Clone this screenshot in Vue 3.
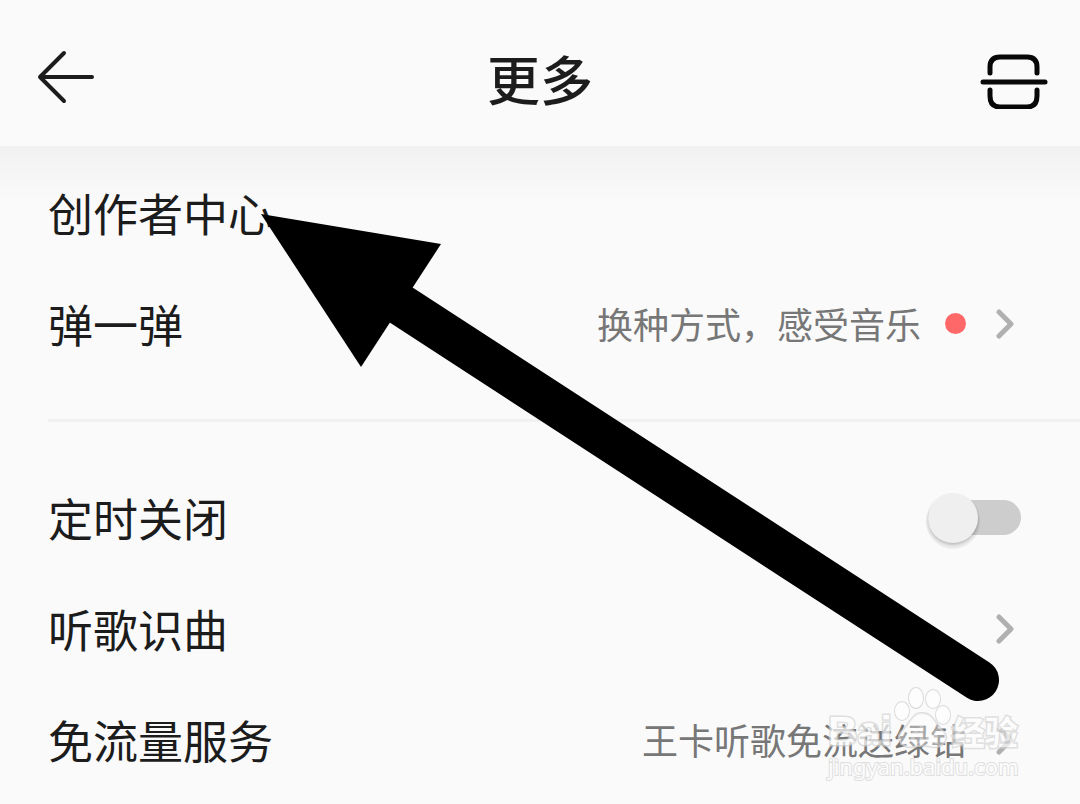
<script setup>
import { ref } from 'vue'

const timerOn = ref(false)

const discover = [
  { label: '创作者中心' },
  { label: '弹一弹', note: '换种方式，感受音乐', dot: true, chevron: true },
]
const services = [
  { label: '听歌识曲', chevron: true },
  { label: '免流量服务', note: '王卡听歌免流送绿钻', chevron: true },
]
</script>

<template>
  <div class="page">
    <header class="bar">
      <button class="icon-btn" type="button" aria-label="返回">
        <svg width="68" height="64" viewBox="0 0 68 64">
          <path d="M32 8 L8 32 L32 56 M8 32 H60" />
        </svg>
      </button>
      <h1>更多</h1>
      <button class="icon-btn" type="button" aria-label="扫一扫">
        <svg class="scan" width="68" height="64" viewBox="0 0 68 64">
          <path d="M10 28 V22 Q10 12 20 12 H47 Q57 12 57 22 V28" />
          <path d="M3 37 H65" />
          <path d="M10 45 V51 Q10 62 20 62 H47 Q57 62 57 51 V45" />
        </svg>
      </button>
    </header>

    <main>
      <nav class="group first">
        <a v-for="item in discover" :key="item.label" class="row" href="#">
          <span class="label">{{ item.label }}</span>
          <span v-if="item.note" class="note">{{ item.note }}</span>
          <span v-if="item.dot" class="dot"></span>
          <svg v-if="item.chevron" class="chevron" width="18" height="30" viewBox="0 0 18 30">
            <path d="M3 3 L15 15 L3 27" />
          </svg>
        </a>
      </nav>
      <hr />
      <nav class="group second">
        <div class="row timer">
          <label class="label" for="timer">定时关闭</label>
          <input id="timer" v-model="timerOn" class="switch" type="checkbox" role="switch" />
        </div>
        <a v-for="item in services" :key="item.label" class="row" href="#">
          <span class="label">{{ item.label }}</span>
          <span v-if="item.note" class="note">{{ item.note }}</span>
          <svg v-if="item.chevron" class="chevron" width="18" height="30" viewBox="0 0 18 30">
            <path d="M3 3 L15 15 L3 27" />
          </svg>
        </a>
      </nav>
    </main>

    <svg class="pointer" width="740" height="490" viewBox="260 212 740 490" aria-hidden="true">
      <path d="M261 214 L441 244 L361 367 Z" />
      <path class="shaft" d="M395 301 L978 680" />
    </svg>

    <div class="watermark">
      <div class="brand">
        <span>Bai</span>
        <svg width="60" height="64" viewBox="0 0 60 64" aria-hidden="true">
          <ellipse cx="10" cy="24" rx="7" ry="9" />
          <ellipse cx="24" cy="11" rx="7" ry="10" />
          <ellipse cx="41" cy="12" rx="7" ry="9" />
          <ellipse cx="51" cy="28" rx="7" ry="9" />
          <path class="pad" d="M30 26 C42 26 43 38 52 45 C58 52 50 62 40 60 C33 58 28 58 21 60 C11 62 3 52 9 45 C18 38 19 26 30 26 Z" />
          <text x="18" y="57">du</text>
        </svg>
        <span class="cn">经验</span>
      </div>
      <div class="site">jingyan.baidu.com</div>
    </div>
  </div>
</template>

<style>
body {
  background: #fafafa;
}
</style>

<style scoped>
.page {
  position: relative;
  min-height: 100vh;
  box-sizing: border-box;
  overflow: hidden;
  background: #fafafa;
  color: #1c1c1c;
  font-family: "Noto Sans CJK SC", sans-serif;
}
.bar {
  display: flex;
  align-items: center;
  justify-content: space-between;
  height: 146px;
  padding: 8px 32px 0;
  box-sizing: border-box;
}
.icon-btn {
  display: flex;
  width: 68px;
  padding: 0;
  border: 0;
  background: none;
}
.icon-btn svg {
  fill: none;
  stroke: #1c1c1c;
  stroke-width: 4;
  stroke-linecap: round;
  stroke-linejoin: round;
}
.icon-btn .scan {
  stroke: #080808;
  stroke-width: 5;
}
h1 {
  margin: 0;
  padding-top: 2px;
  font-size: 53px;
  line-height: 80px;
  font-weight: 500;
}
main {
  background: linear-gradient(#f1f1f1, #fafafa 56px);
}
.first {
  padding-top: 14px;
}
.second {
  padding-top: 43px;
}
.row {
  display: flex;
  align-items: center;
  height: 111px;
  box-sizing: border-box;
  padding: 0 66px 6px 48px;
  color: inherit;
  text-decoration: none;
}
.timer {
  padding-right: 59px;
}
.label {
  flex: 1;
  font-size: 45px;
  line-height: 64px;
}
.note {
  margin-right: 30px;
  padding-bottom: 2px;
  color: #777;
  font-size: 36px;
  line-height: 52px;
}
.note:has(+ .dot) {
  margin-right: 24px;
}
.dot {
  width: 21px;
  height: 21px;
  margin-right: 30px;
  border-radius: 50%;
  background: #ff6868;
}
.chevron {
  fill: none;
  stroke: #b0b0b0;
  stroke-width: 5;
  stroke-linecap: round;
  stroke-linejoin: round;
}
hr {
  height: 3px;
  margin: 37px 0 0 48px;
  border: 0;
  background: #f1f1f1;
}
.switch {
  display: flex;
  align-items: center;
  appearance: none;
  width: 93px;
  height: 35px;
  margin: 0;
  border-radius: 18px;
  background: #cdcdcd;
}
.switch::before {
  content: "";
  width: 50px;
  height: 50px;
  border-radius: 50%;
  background: #efefef;
  box-shadow: 0 2px 3px rgba(0, 0, 0, 0.2), 0 4px 0 2px rgba(0, 0, 0, 0.05);
}
.switch:checked {
  justify-content: flex-end;
}
.pointer {
  position: absolute;
  top: 212px;
  left: 260px;
  pointer-events: none;
}
.shaft {
  stroke: #000;
  stroke-width: 42;
  stroke-linecap: round;
}
.watermark {
  position: absolute;
  top: 686px;
  right: 58px;
  width: 194px;
  color: #fdfdfd;
  font-family: "Liberation Sans", "Noto Sans CJK SC", sans-serif;
  -webkit-text-stroke: 3px #d4d4d4;
  paint-order: stroke fill;
  opacity: 0.7;
  pointer-events: none;
}
.brand {
  display: flex;
  align-items: flex-end;
  height: 65px;
  font-size: 41px;
  line-height: 40px;
  font-weight: 700;
}
.brand .cn {
  font-family: "Noto Sans CJK SC", sans-serif;
  font-size: 33px;
}
.brand svg {
  flex: none;
  fill: #fff;
  stroke: #cfcfcf;
  stroke-width: 2;
}
.brand .pad {
  fill-opacity: 0.5;
}
.brand text {
  fill: #fff;
  fill-opacity: 0.6;
  stroke: none;
  -webkit-text-stroke: 0;
  font-size: 24px;
}
.site {
  font-family: "Noto Sans", sans-serif;
  font-size: 22px;
  line-height: 30px;
  -webkit-text-stroke: 2px #d4d4d4;
}
</style>
